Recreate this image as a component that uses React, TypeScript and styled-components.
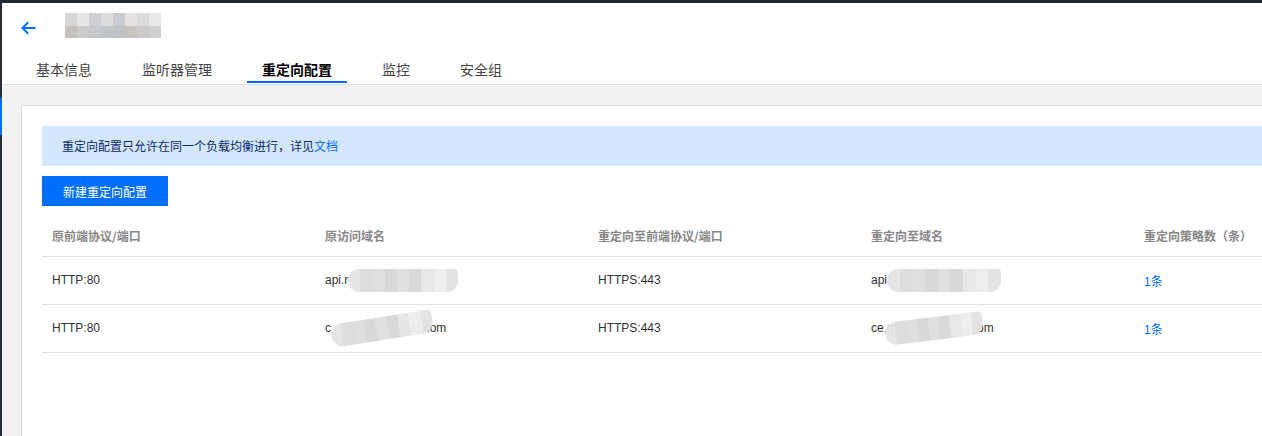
import styled, { createGlobalStyle } from "styled-components";

const GlobalStyle = createGlobalStyle`
  html, body {
    margin: 0;
    padding: 0;
    height: 100%;
    overflow: hidden;
    background: #fff;
  }
  body {
    font-family: "Liberation Sans", "Noto Sans CJK SC", sans-serif;
    font-size: 12px;
    color: #333;
  }
  #root {
    height: 100%;
  }
`;

type Host = { head: string; blur: number; tail: string; tilt: number; lead: number; pull: number };

type Rule = {
  id: number;
  fromPort: string;
  fromHost: Host;
  toPort: string;
  toHost: Host;
  count: string;
};

const tabs = ["基本信息", "监听器管理", "重定向配置", "监控", "安全组"];

const columns = [
  "原前端协议/端口",
  "原访问域名",
  "重定向至前端协议/端口",
  "重定向至域名",
  "重定向策略数（条）",
];

const rules: Rule[] = [
  {
    id: 1,
    fromPort: "HTTP:80",
    fromHost: { head: "api.r", blur: 110, tail: "", tilt: 0, lead: 0, pull: 0 },
    toPort: "HTTPS:443",
    toHost: { head: "api", blur: 114, tail: "", tilt: 0, lead: 0, pull: 0 },
    count: "1条",
  },
  {
    id: 2,
    fromPort: "HTTP:80",
    fromHost: { head: "c", blur: 102, tail: "ud.com", tilt: -9, lead: 0, pull: -26 },
    toPort: "HTTPS:443",
    toHost: { head: "ce.m", blur: 98, tail: "om", tilt: -7, lead: -12, pull: -6 },
    count: "1条",
  },
];

const titleTiles = [
  "#d6d6d8", "#e6e6e6", "#cfd0d3", "#dcdcdc", "#cacbd0", "#e2e2e0", "#dadbdc", "#e8e8e9",
  "#c4c0bd", "#c9cbcd", "#c6c7c9", "#c2c5c8", "#bfc3c6", "#c6c4bd", "#c8cacc", "#d0d0d0",
];

const blurTones = ["#e4e4e4", "#dcdcdc", "#e0dedc", "#d6d6d7", "#dddfe0", "#d8d8d8", "#e6e6e6", "#eeeeee", "#e2e2e2"];

function Redacted({ head, blur, tail, tilt, lead, pull }: Host) {
  const stops = blurTones
    .map((c, i) => `${c} ${(i * 100) / blurTones.length}% ${((i + 1) * 100) / blurTones.length}%`)
    .join(", ");
  return (
    <HostText>
      {head}
      <Smudge
        $width={blur}
        $tilt={tilt}
        $lead={lead}
        $pull={pull}
        style={{ background: `linear-gradient(90deg, ${stops})` }}
      />
      {tail}
    </HostText>
  );
}

function BackArrow() {
  return (
    <svg width="16" height="16" viewBox="0 0 16 16" fill="none">
      <path
        d="M14.5 8H2.5M7.5 3L2.5 8L7.5 13"
        stroke="#006eff"
        strokeWidth="2"
        strokeLinecap="square"
      />
    </svg>
  );
}

export default function App() {
  return (
    <>
      <GlobalStyle />
      <Page>
        <TopBar />
        <Body>
          <Sidebar>
            <Indicator />
          </Sidebar>
          <Content>
            <Header>
              <TitleRow>
                <BackButton>
                  <BackArrow />
                </BackButton>
                <TitleMosaic>
                  {titleTiles.map((c, i) => (
                    <Tile key={i} style={{ background: c }} />
                  ))}
                </TitleMosaic>
              </TitleRow>
              <TabBar>
                {tabs.map((t) => (
                  <Tab key={t} $active={t === "重定向配置"}>
                    {t}
                  </Tab>
                ))}
              </TabBar>
            </Header>
            <Main>
              <Card>
                <Notice>
                  重定向配置只允许在同一个负载均衡进行，详见<NoticeLink>文档</NoticeLink>
                </Notice>
                <PrimaryButton>新建重定向配置</PrimaryButton>
                <Table>
                  <thead>
                    <tr>
                      {columns.map((c) => (
                        <HeadCell key={c}>{c}</HeadCell>
                      ))}
                    </tr>
                  </thead>
                  <tbody>
                    {rules.map((r) => (
                      <tr key={r.id}>
                        <Cell>{r.fromPort}</Cell>
                        <Cell>
                          <Redacted {...r.fromHost} />
                        </Cell>
                        <Cell>{r.toPort}</Cell>
                        <Cell>
                          <Redacted {...r.toHost} />
                        </Cell>
                        <Cell>
                          <CountLink>{r.count}</CountLink>
                        </Cell>
                      </tr>
                    ))}
                  </tbody>
                </Table>
              </Card>
            </Main>
          </Content>
        </Body>
      </Page>
    </>
  );
}

const Page = styled.div`
  display: flex;
  flex-direction: column;
  height: 100%;
  overflow: hidden;
`;

const TopBar = styled.div`
  height: 3px;
  flex-shrink: 0;
  background: #232a35;
`;

const Body = styled.div`
  display: flex;
  flex: 1;
  min-height: 0;
`;

const Sidebar = styled.div`
  width: 2px;
  flex-shrink: 0;
  background: #262c36;
  display: flex;
  flex-direction: column;
`;

const Indicator = styled.div`
  margin-top: 95px;
  height: 37px;
  background: #006eff;
`;

const Content = styled.div`
  flex: 1;
  min-width: 0;
  display: flex;
  flex-direction: column;
`;

const Header = styled.header`
  background: #fff;
  border-bottom: 1px solid #dddddd;
  padding-left: 18px;
`;

const TitleRow = styled.div`
  height: 50px;
  display: flex;
  align-items: center;
  gap: 29px;
`;

const BackButton = styled.span`
  display: flex;
  width: 16px;
  height: 16px;
  cursor: pointer;
`;

const TitleMosaic = styled.div`
  display: grid;
  grid-template-columns: repeat(8, 12px);
  grid-template-rows: 13px 12px;
  filter: blur(0.6px);
  margin-top: -6px;
`;

const Tile = styled.div``;

const TabBar = styled.nav`
  display: flex;
  gap: 20px;
  padding-left: 1px;
  padding-bottom: 1px;
`;

const Tab = styled.div<{ $active?: boolean }>`
  padding: 6px 15px 2px;
  line-height: 20px;
  font-size: 14px;
  font-family: "Noto Sans CJK SC", sans-serif;
  color: ${(p) => (p.$active ? "#000" : "#444")};
  font-weight: ${(p) => (p.$active ? 700 : 400)};
  border-bottom: 2px solid ${(p) => (p.$active ? "#006eff" : "transparent")};
  cursor: pointer;
`;

const Main = styled.main`
  flex: 1;
  background: #f2f2f2;
  padding: 20px 0 0 19px;
  overflow: hidden;
`;

const Card = styled.section`
  width: max-content;
  min-height: calc(100% + 20px);
  box-sizing: border-box;
  background: #fff;
  border: 1px solid #dddddd;
  border-right: none;
  border-bottom: none;
  padding: 20px;
  display: flex;
  flex-direction: column;
  align-items: flex-start;
`;

const Notice = styled.div`
  align-self: stretch;
  background: #d5e7ff;
  color: #0a2a6e;
  padding: 10px 20px;
  line-height: 20px;
  font-family: "Noto Sans CJK SC", sans-serif;
`;

const NoticeLink = styled.a`
  color: #006eff;
  text-decoration: none;
  cursor: pointer;
`;

const PrimaryButton = styled.button`
  margin-top: 10px;
  height: 30px;
  padding: 0 21px;
  border: none;
  background: #006eff;
  color: #fff;
  font-size: 12px;
  font-family: "Noto Sans CJK SC", sans-serif;
  cursor: pointer;
`;

const Table = styled.table`
  margin-top: 10px;
  width: 1365px;
  table-layout: fixed;
  border-collapse: collapse;
`;

const HeadCell = styled.th`
  height: 40px;
  padding: 0 10px;
  text-align: left;
  font-weight: 700;
  color: #888;
  font-family: "Noto Sans CJK SC", sans-serif;
  border-bottom: 1px solid #e2e2e2;
  box-sizing: border-box;
`;

const Cell = styled.td`
  height: 48px;
  padding: 0 10px;
  color: #333;
  border-bottom: 1px solid #e2e2e2;
  box-sizing: border-box;
  white-space: nowrap;
`;

const HostText = styled.span`
  display: inline-flex;
  align-items: center;
`;

const Smudge = styled.span<{ $width: number; $tilt: number; $lead: number; $pull: number }>`
  display: inline-block;
  width: ${(p) => p.$width}px;
  height: 23px;
  border-radius: 11px 4px 11px 11px;
  margin-left: ${(p) => p.$lead}px;
  margin-right: ${(p) => p.$pull}px;
  transform: rotate(${(p) => p.$tilt}deg);
  filter: blur(0.6px);
  opacity: 0.95;
`;

const CountLink = styled.a`
  color: #006eff;
  text-decoration: none;
  cursor: pointer;
  font-family: "Liberation Sans", "Noto Sans CJK SC", sans-serif;
`;
